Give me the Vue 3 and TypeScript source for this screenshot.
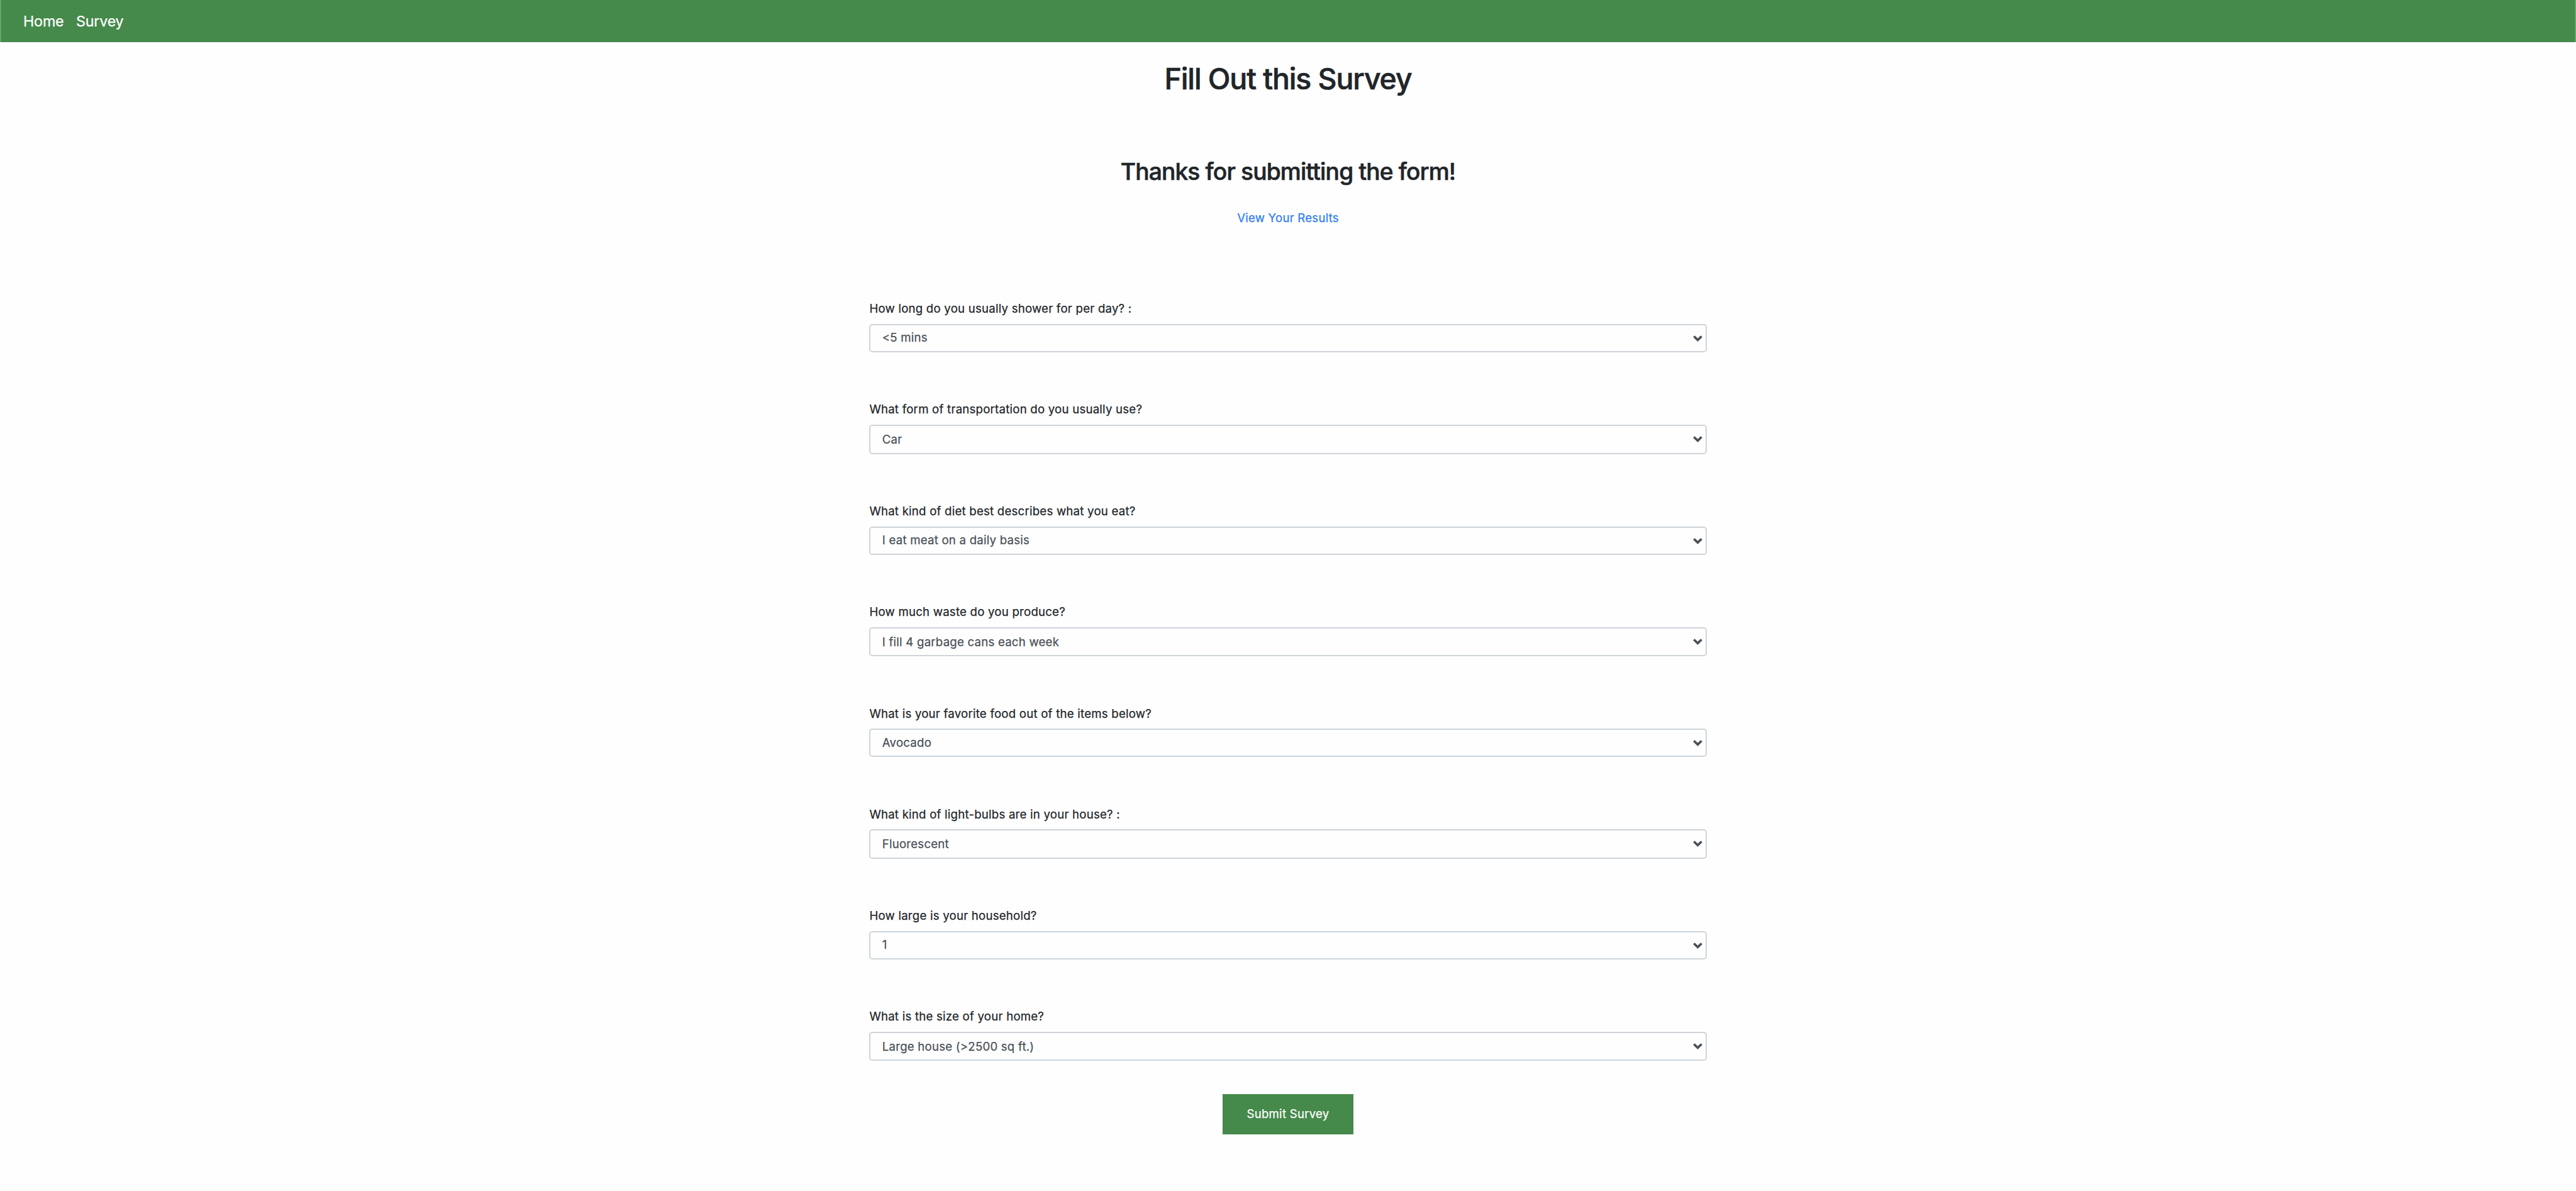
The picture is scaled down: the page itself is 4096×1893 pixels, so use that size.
<script setup lang="ts">
import { ref } from 'vue'

interface Question {
  id: string
  label: string
  options: string[]
}

const questions: Question[] = [
  { id: 'shower', label: 'How long do you usually shower for per day? :', options: ['<5 mins'] },
  { id: 'transport', label: 'What form of transportation do you usually use?', options: ['Car'] },
  { id: 'diet', label: 'What kind of diet best describes what you eat?', options: ['I eat meat on a daily basis'] },
  { id: 'waste', label: 'How much waste do you produce?', options: ['I fill 4 garbage cans each week'] },
  { id: 'food', label: 'What is your favorite food out of the items below?', options: ['Avocado'] },
  { id: 'bulbs', label: 'What kind of light-bulbs are in your house? :', options: ['Fluorescent'] },
  { id: 'household', label: 'How large is your household?', options: ['1'] },
  { id: 'home', label: 'What is the size of your home?', options: ['Large house (>2500 sq ft.)'] },
]

const answers = ref<Record<string, string>>(
  Object.fromEntries(questions.map((q) => [q.id, q.options[0]])),
)
</script>

<template>
  <div class="page">
    <nav class="navbar">
      <a class="nav-link">Home</a>
      <a class="nav-link">Survey</a>
    </nav>

    <main class="content">
      <h1 class="title">Fill Out this Survey</h1>
      <h2 class="thanks">Thanks for submitting the form!</h2>
      <a class="results">View Your Results</a>

      <form class="survey" @submit.prevent>
        <div v-for="q in questions" :key="q.id" class="field">
          <label class="label" :for="q.id">{{ q.label }}</label>
          <div class="control">
            <select :id="q.id" v-model="answers[q.id]" class="select">
              <option v-for="o in q.options" :key="o" :value="o">{{ o }}</option>
            </select>
            <svg class="chevron" viewBox="0 0 15 10" aria-hidden="true">
              <path d="M1.4 1.5 L7.5 7.4 L13.6 1.5" fill="none" stroke="#495057" stroke-width="3.7" />
            </svg>
          </div>
        </div>
        <button class="submit" type="submit">Submit Survey</button>
      </form>
    </main>
  </div>
</template>

<style>
body {
  margin: 0;
  background: #fefefe;
}
</style>

<style scoped>
.page {
  height: 1893px;
  overflow: hidden;
  background: #fefefe;
  color: #212529;
  font-family: Inter, "Liberation Sans", sans-serif;
  font-size: 18.6px;
  line-height: 28.8px;
  letter-spacing: 0.235px;
  -webkit-text-stroke: 0.25px currentColor;
}

.navbar {
  box-sizing: border-box;
  display: flex;
  align-items: center;
  gap: 19.5px;
  height: 67.2px;
  padding: 2px 0 0 35px;
  border: solid #68a06f;
  border-width: 0 2px;
  background: #45894b;
}

.nav-link {
  color: #fff;
  font-size: 23.3px;
  letter-spacing: -0.2px;
}

.content {
  display: flex;
  flex-direction: column;
  align-items: center;
}

.title,
.thanks {
  margin: 0;
  font-weight: 500;
  -webkit-text-stroke: 0.6px currentColor;
}

.title {
  margin-top: 30.3px;
  font-size: 46.5px;
  line-height: 56px;
  letter-spacing: -1.12px;
}

.thanks {
  margin-top: 96.1px;
  font-size: 37.2px;
  line-height: 46px;
  letter-spacing: -0.856px;
}

.results {
  margin-top: 36.5px;
  color: #2f7bf8;
}

.survey {
  display: flex;
  flex-direction: column;
  align-items: stretch;
  width: 1331.2px;
  margin-top: 115.5px;
}

.field {
  height: 160px;
}

.field:nth-child(even) {
  height: 161.6px;
}

.label {
  display: block;
  margin-bottom: 10px;
}

.control {
  position: relative;
  height: 44.8px;
}

.field:nth-child(even) .control {
  height: 46.4px;
}

.select {
  display: block;
  box-sizing: border-box;
  width: 100%;
  height: 100%;
  margin: 0;
  padding: 0 40px 0 18.4px;
  border: 2px solid #ced4da;
  border-radius: 5px;
  background: #fefefe;
  color: #495057;
  font: inherit;
  letter-spacing: 0.235px;
  appearance: none;
  outline: none;
}

.field:nth-child(odd) .select {
  padding-bottom: 1.6px;
}

.chevron {
  position: absolute;
  top: 18px;
  right: 6.6px;
  width: 15px;
  height: 10px;
  pointer-events: none;
}

.submit {
  align-self: center;
  width: 208px;
  height: 64px;
  margin-top: -23.6px;
  padding: 0 0 1.8px;
  border: 0;
  background: #45894b;
  color: #fff;
  font: inherit;
  letter-spacing: 0.26px;
}
</style>
